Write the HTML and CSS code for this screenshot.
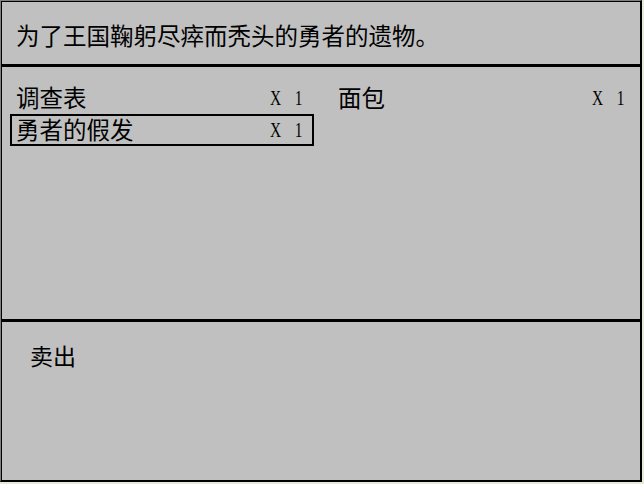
FILE: index.html
```html
<!DOCTYPE html>
<html lang="zh-CN">
<head>
  <meta charset="UTF-8">
  <title>道具</title>
  <link rel="stylesheet" href="styles.css">
</head>
<body>
  <div class="window">
    <!-- 物品说明 -->
    <div class="panel desc">为了王国鞠躬尽瘁而秃头的勇者的遗物。</div>

    <!-- 物品列表 -->
    <div class="panel items">
      <div class="item">
        <span class="name">调查表</span>
        <span class="count">X 1</span>
      </div>
      <div class="item">
        <span class="name">面包</span>
        <span class="count">X 1</span>
      </div>
      <div class="item selected">
        <span class="name">勇者的假发</span>
        <span class="count">X 1</span>
      </div>
    </div>

    <!-- 操作菜单 -->
    <div class="panel actions">
      <div class="action">卖出</div>
    </div>
  </div>
</body>
</html>
```

FILE: styles.css
```css
* {
  margin: 0;
  padding: 0;
  box-sizing: border-box;
}

body {
  background-color: #e6ead8;
  font-family: "Noto Sans CJK SC", "Noto Sans", sans-serif;
  color: #000;
}

.window {
  width: 642px;
  height: 482px;
  background-color: #c0c0c0;
  border-top: 1px solid #808080;
  border-left: 1px solid #808080;
  border-right: 2px solid #000;
  border-bottom: 2px solid #000;
  box-shadow: inset 1px 1px 0 #000;
  display: flex;
  flex-direction: column;
}

.panel {
  border-bottom: 3px solid #000;
}

.panel:last-child {
  border-bottom: none;
}

.desc {
  height: 66px;
  padding: 6px 0 0 15px;
  display: flex;
  align-items: center;
  font-size: 23.5px;
  line-height: 1;
}

.items {
  height: 255px;
  padding: 15px 4px 0 9px;
  display: grid;
  grid-template-columns: 304px 304px;
  grid-auto-rows: 32px;
  column-gap: 18px;
  align-content: start;
}

.item {
  display: flex;
  justify-content: space-between;
  align-items: center;
  padding: 0 10px 0 4px;
  border: 2px solid transparent;
}

.item.selected {
  border-color: #000;
}

.name {
  font-size: 23.5px;
  line-height: 1;
}

/* 数量：窄而高的衬线字 */
.count {
  display: inline-block;
  font-family: "Liberation Serif", "DejaVu Serif", serif;
  font-size: 22px;
  line-height: 1;
  word-spacing: 14px;
  transform: scaleX(0.7);
  transform-origin: right center;
}

.actions {
  flex: 1;
  padding: 22px 0 0 29px;
}

.action {
  font-size: 23px;
  line-height: 1;
}
```
